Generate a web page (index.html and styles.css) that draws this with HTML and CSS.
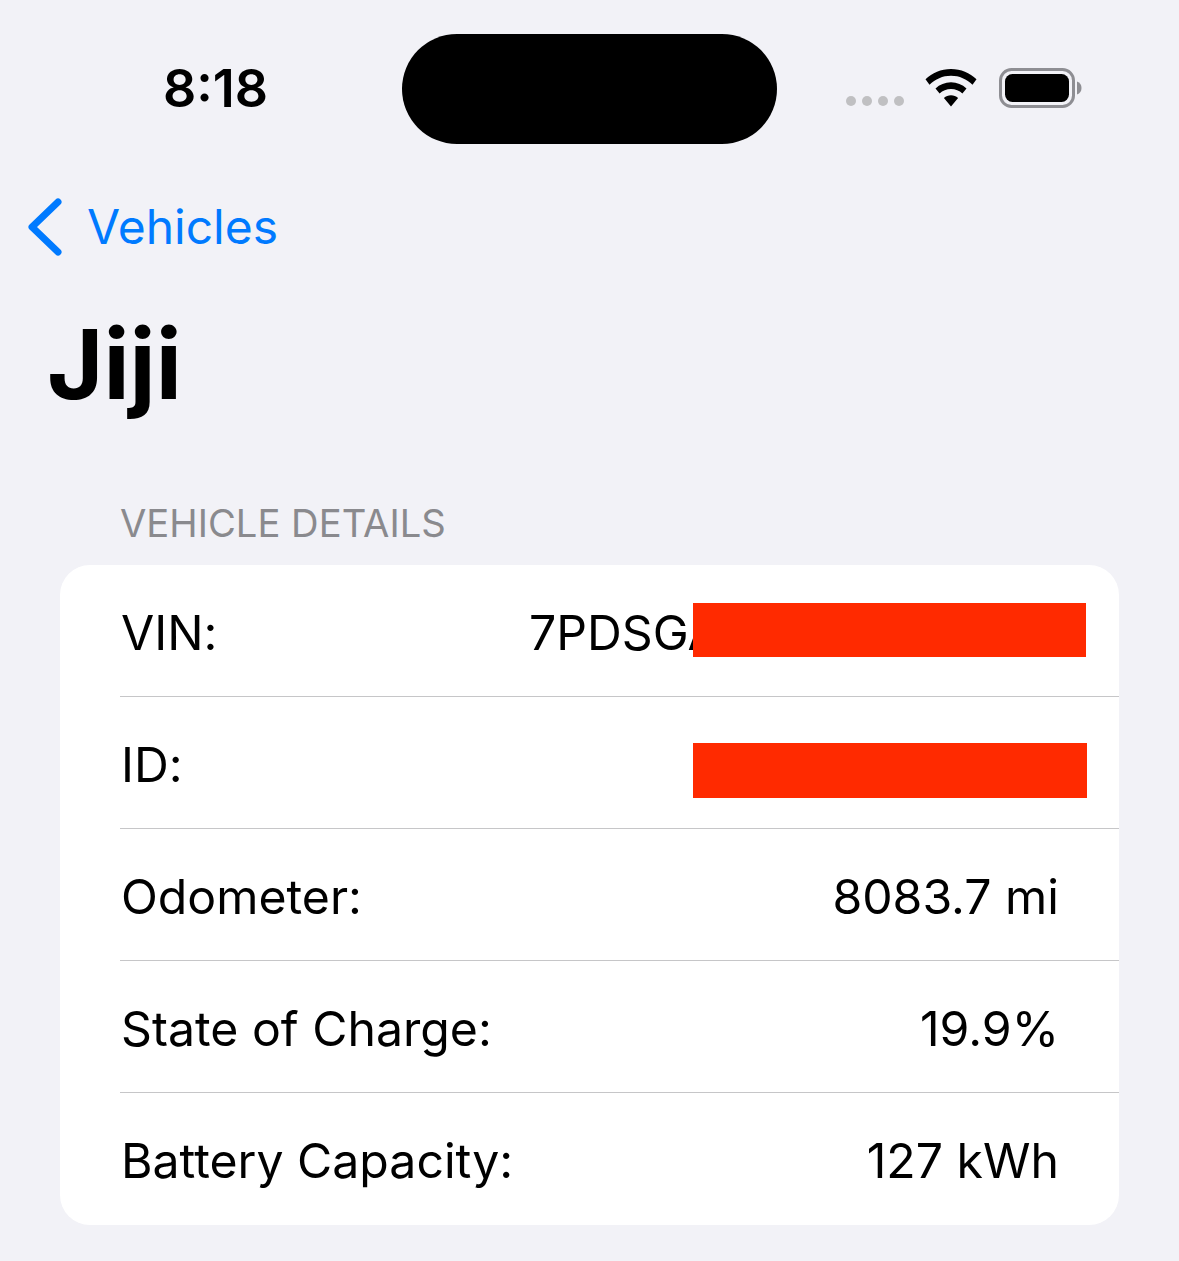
FILE: index.html
```html
<!DOCTYPE html>
<html lang="en">
<head>
<meta charset="utf-8">
<title>Jiji</title>
<link rel="stylesheet" href="styles.css">
</head>
<body>
<div class="status">
  <div class="time">8:18</div>
  <div class="island"></div>
  <div class="indicators">
    <div class="dots"><i></i><i></i><i></i><i></i></div>
    <svg class="wifi" width="52" height="38" viewBox="0 0 52 38"><path fill="#000" d="M26 0C16 0 7.300 3.800 .5 10.300L4.500 15.700C10.200 10.200 17.700 6.800 26 6.800S41.800 10.200 47.500 15.700L51.500 10.300C44.700 3.800 36 0 26 0ZM26 13.200C20 13.200 14.700 15.500 10.500 19.400L14.600 24.400C17.600 21.700 21.600 20 26 20S34.400 21.700 37.400 24.400L41.500 19.400C37.300 15.500 32 13.200 26 13.200ZM26 26.200C23.300 26.200 20.900 27.200 18.900 29L26 37.500L33.100 29C31.100 27.200 28.700 26.200 26 26.200Z"/></svg>
    <svg class="battery" width="83" height="40" viewBox="0 0 83 40"><rect x="1.500" y="1.500" width="73" height="37" rx="11" fill="none" stroke="#8e8e93" stroke-width="3"/><rect x="6" y="6" width="64" height="28" rx="7.500" fill="#000"/><path fill="#8e8e93" d="M78 13.500C81 14.500 82.500 17 82.500 20S81 25.500 78 26.500Z"/></svg>
  </div>
</div>
<nav class="nav">
  <svg class="chevron" width="36" height="58" viewBox="0 0 36 58"><path d="M32 4L6 29L32 54" fill="none" stroke="#007aff" stroke-width="7" stroke-linecap="round" stroke-linejoin="round"/></svg>
  <span class="back">Vehicles</span>
</nav>
<h1 class="title">Jiji</h1>
<div class="section-label">VEHICLE DETAILS</div>
<section class="card">
  <div class="row"><span>VIN:</span><span class="vin">7PDSGA</span><div class="redact redact-vin"></div></div>
  <div class="row"><span>ID:</span><div class="redact redact-id"></div></div>
  <div class="row"><span>Odometer:</span><span>8083.7 mi</span></div>
  <div class="row"><span>State of Charge:</span><span>19.9%</span></div>
  <div class="row"><span>Battery Capacity:</span><span>127 kWh</span></div>
</section>
</body>
</html>
```
FILE: styles.css
```css
* { box-sizing: border-box; }
html, body { margin: 0; padding: 0; }
body {
  width: 1179px;
  height: 1261px;
  overflow: hidden;
  background: #f2f2f7;
  color: #000;
  font-family: Inter, "Liberation Sans", sans-serif;
}
.status {
  position: relative;
  height: 144px;
  padding-top: 34px;
  display: flex;
  justify-content: center;
}
.island { width: 375px; height: 110px; border-radius: 55px; background: #000; }
.time {
  position: absolute;
  left: 163px;
  top: 59px;
  font-size: 52px;
  line-height: 60px;
  font-weight: 600;
}
.indicators {
  position: absolute;
  left: 846px;
  top: 68px;
  display: flex;
  align-items: flex-start;
}
.dots { display: flex; gap: 6px; margin-top: 28px; }
.dots i { width: 10px; height: 10px; border-radius: 50%; background: #c0c0c2; }
.wifi { margin-left: 21px; margin-top: 1px; }
.battery { margin-left: 22px; }
.nav {
  display: flex;
  align-items: center;
  height: 58px;
  margin-top: 54px;
  padding-left: 26px;
  gap: 25px;
}
.back { color: #007aff; font-size: 48px; line-height: 58px; font-feature-settings: "calt" 0; }
.title {
  margin: 50px 0 0 47px;
  font-size: 96.5px;
  line-height: 116px;
  font-weight: 700;
}
.section-label {
  margin: 78px 0 0 120px;
  font-size: 38.2px;
  line-height: 46px;
  color: #8a8a8e;
}
.card {
  width: 1059px;
  margin: 19px 0 0 60px;
  background: #fff;
  border-radius: 30px;
  overflow: hidden;
}
.row {
  position: relative;
  height: 132px;
  margin-left: 60px;
  padding: 3px 60px 0 1px;
  display: flex;
  align-items: center;
  justify-content: space-between;
  font-size: 48.2px;
  font-feature-settings: "calt" 0;
  border-bottom: 1px solid #c6c6c8;
}
.row:last-child { border-bottom: 0; }
.vin { width: 530px; }
.redact { position: absolute; left: 573px; background: #ff2a00; }
.redact-vin { top: 38px; width: 393px; height: 54px; }
.redact-id { top: 46px; width: 394px; height: 55px; }
```
